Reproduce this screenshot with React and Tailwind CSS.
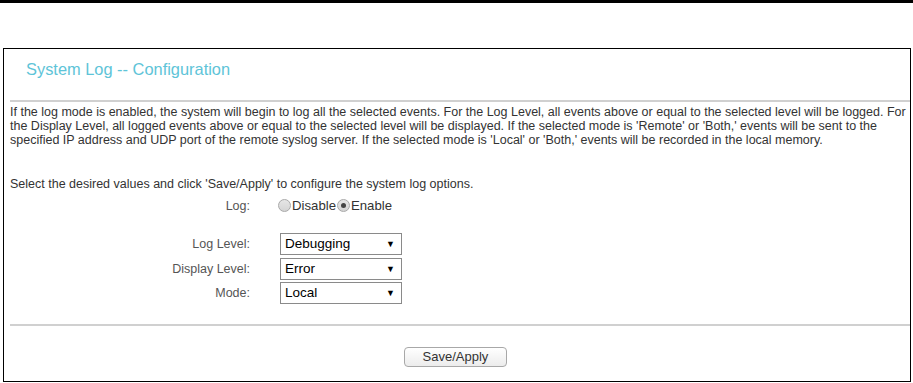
import React from "react";

function Radio({ checked }) {
  return (
    <span className="inline-flex items-center justify-center w-[13px] h-[13px] rounded-full border border-[#a9a9a9] bg-gradient-to-b from-[#e6e6e6] to-[#d4d4d4] mx-[1px]">
      {checked ? <span className="w-[5px] h-[5px] rounded-full bg-[#444]" /> : null}
    </span>
  );
}

function Select({ value }) {
  return (
    <div className="w-[122px] h-[22px] border border-[#8a8a8a] bg-white flex items-center justify-between pl-[4px] pr-[6px] text-[13.5px] text-black">
      <span>{value}</span>
      <span className="text-[9px] leading-none">▼</span>
    </div>
  );
}

function Row({ label, children, className = "" }) {
  return (
    <div className={"flex items-center " + className}>
      <div className="w-[240px] text-right text-[12.5px] text-[#555]">{label}</div>
      <div className="ml-[30px]">{children}</div>
    </div>
  );
}

export default function App() {
  return (
    <div className="w-[913px] h-[383px] bg-white overflow-hidden" style={{ fontFamily: '"Liberation Sans", Arial, sans-serif' }}>
      <div className="h-[3px] bg-black" />
      <div className="mt-[45px] ml-[3px] w-[908px] h-[334px] border border-black">
        <div className="h-[51px] pt-[10px] pl-[22px] text-[16.4px] leading-[20px] text-[#5ec4d8]">
          System Log -- Configuration
        </div>
        <div className="ml-[6px] h-[2px] bg-[#d0d0d0]" />
        <div className="ml-[6px] mt-[3px] text-[12.5px] leading-[14px] text-[#333] whitespace-nowrap">
          If the log mode is enabled, the system will begin to log all the selected events. For the Log Level, all events above or equal to the selected level will be logged. For
          <br />
          the Display Level, all logged events above or equal to the selected level will be displayed. If the selected mode is 'Remote' or 'Both,' events will be sent to the
          <br />
          specified IP address and UDP port of the remote syslog server. If the selected mode is 'Local' or 'Both,' events will be recorded in the local memory.
        </div>
        <div className="ml-[6px] mt-[30px] text-[12.5px] leading-[14px] text-[#333]">
          Select the desired values and click 'Save/Apply' to configure the system log options.
        </div>
        <div className="ml-[6px]">
          <Row label="Log:" className="mt-[5px] h-[20px]">
            <div className="flex items-center text-[13.2px] text-[#333] -ml-[3px]">
              <Radio checked={false} />
              <span>Disable</span>
              <Radio checked={true} />
              <span>Enable</span>
            </div>
          </Row>
          <Row label="Log Level:" className="mt-[17px]">
            <Select value="Debugging" />
          </Row>
          <Row label="Display Level:" className="mt-[3px]">
            <Select value="Error" />
          </Row>
          <Row label="Mode:" className="mt-[2px]">
            <Select value="Local" />
          </Row>
        </div>
        <div className="ml-[6px] mt-[20px] h-[2px] bg-[#d0d0d0]" />
        <div className="ml-[400px] mt-[18px]">
          <button className="w-[103px] h-[20px] rounded-[4px] border border-[#a8a8a8] bg-gradient-to-b from-white to-[#ececec] text-[13px] leading-none text-[#333]">
            Save/Apply
          </button>
        </div>
      </div>
    </div>
  );
}
